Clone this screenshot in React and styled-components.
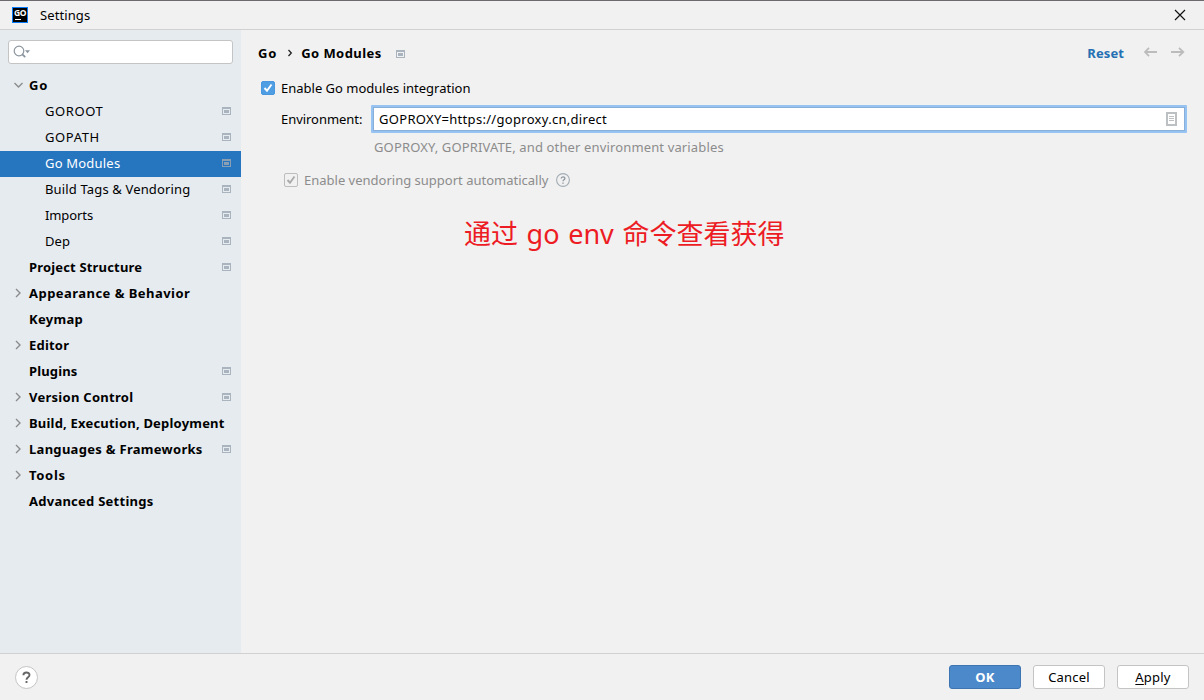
import React from "react";
import styled, { createGlobalStyle } from "styled-components";

const GlobalStyle = createGlobalStyle`
  *, *::before, *::after { box-sizing: border-box; }
  body { margin: 0; background: #f1f1f1; overflow: hidden; }
`;

const Window = styled.div`
  width: 1204px;
  height: 700px;
  display: flex;
  flex-direction: column;
  background: #f1f1f1;
  border-top: 1px solid #6c6a6c;
  font-family: "Noto Sans", "Noto Sans CJK SC", sans-serif;
  font-size: 13px;
  line-height: 18px;
  color: #000;
`;

const Label = styled.span`
  white-space: pre;
  letter-spacing: ${(p) => p.$track || 0}px;
`;

const TitleBar = styled.header`
  display: flex;
  align-items: center;
  height: 29px;
  flex: none;
  padding: 0 18px 0 12px;
  border-bottom: 1px solid #d1d1d1;
`;

const Title = styled(Label)`
  flex: 1;
  margin-left: 12px;
`;

const Body = styled.div`
  display: flex;
  flex: 1;
  min-height: 0;
`;

const Sidebar = styled.nav`
  width: 241px;
  flex: none;
  padding-top: 10px;
  background: #e6ebf0;
`;

const SearchBox = styled.div`
  display: flex;
  align-items: center;
  width: 225px;
  height: 24px;
  margin: 0 0 9px 8px;
  padding-left: 4px;
  background: #fff;
  border: 1px solid #c4c4c4;
  border-radius: 3px;
`;

const Row = styled.div`
  display: flex;
  align-items: center;
  height: 26px;
  padding: 0 10px 2px ${(p) => (p.$child ? 45 : 12)}px;
  font-weight: ${(p) => (p.$child ? 400 : 700)};
  color: ${(p) => (p.$selected ? "#fff" : "#000")};
  background: ${(p) => (p.$selected ? "#2675bf" : "transparent")};
`;

const ArrowSlot = styled.span`
  display: flex;
  width: 17px;
  flex: none;
`;

const RowLabel = styled(Label)`
  flex: 1;
`;

const Content = styled.main`
  flex: 1;
  padding: 13px 17px 0;
`;

const Header = styled.div`
  display: flex;
  align-items: center;
  height: 20px;
  font-weight: 700;
`;

const Crumb = styled.span`
  display: flex;
  margin: 0 8px 0 10px;
`;

const Badge = styled.span`
  display: flex;
  margin: 1px 0 0 14px;
`;

const Actions = styled.div`
  display: flex;
  align-items: center;
  margin-left: auto;
  color: #2470b3;
`;

const History = styled.span`
  display: flex;
  gap: 13px;
  margin: 0 2px 2px 20px;
`;

const CheckRow = styled.label`
  display: flex;
  align-items: center;
  height: 18px;
  margin: ${(p) => (p.$nested ? "15px 0 0 26px" : "16px 0 0 3px")};
  color: ${(p) => (p.$nested ? "#8c8c8c" : "#000")};
`;

const CheckBox = styled.span`
  display: flex;
  width: 14px;
  height: 14px;
  flex: none;
  margin-right: 6px;
  border-radius: 2px;
  border: 1px solid ${(p) => (p.$disabled ? "#bdbdbd" : "#4a97dd")};
  background: ${(p) => (p.$disabled ? "#f1f1f1" : "#4f9ee3")};
  color: ${(p) => (p.$disabled ? "#ababab" : "#fff")};
`;

const HelpSlot = styled.span`
  display: flex;
  margin-left: 8px;
`;

const Field = styled.div`
  display: flex;
  align-items: center;
  margin: 8px 0 0 23px;
  height: 28px;
`;

const Input = styled.div`
  display: flex;
  align-items: center;
  justify-content: space-between;
  width: 816px;
  height: 28px;
  margin-left: auto;
  padding: 0 8px 0 6px;
  background: #fff;
  border: 2px solid #97c3f3;
  box-shadow: inset 0 0 0 1px #87afda;
  border-radius: 1px;
`;

const Hint = styled.div`
  margin: 5px 0 0 116px;
  height: 18px;
  color: #8c8c8c;
`;

const Annotation = styled.div`
  margin: 25px 0 0 206px;
  font-size: 27px;
  line-height: 40px;
  word-spacing: 1.6px;
  color: #ed1c24;
`;

const Footer = styled.footer`
  display: flex;
  align-items: center;
  gap: 12px;
  height: 47px;
  flex: none;
  padding: 0 15px;
  border-top: 1px solid #d1d1d1;
`;

const HelpButton = styled.button`
  display: flex;
  align-items: center;
  justify-content: center;
  width: 23px;
  height: 23px;
  margin: 1px auto 0 0;
  padding: 0;
  border: 1px solid #c4c4c4;
  border-radius: 50%;
  background: #fff;
`;

const Button = styled.button`
  width: 72px;
  height: 24px;
  padding: 0 0 1px;
  border-radius: 3px;
  border: 1px solid ${(p) => (p.$primary ? "#3d75b3" : "#c4c4c4")};
  background: ${(p) => (p.$primary ? "#4c89ca" : "#fff")};
  color: ${(p) => (p.$primary ? "#fff" : "#000")};
  font: inherit;
  font-weight: ${(p) => (p.$primary ? 700 : 400)};
  letter-spacing: 0.2px;
`;

const Mnemonic = styled.span`
  text-decoration: underline;
  text-underline-offset: 2px;
`;

const LogoBox = styled.span`
  display: flex;
  flex-direction: column;
  width: 16px;
  height: 16px;
  padding: 1px 0 0 1px;
  border: 1px solid #087cfa;
  background: #000;
  color: #fff;
  font: 700 8.5px/8px "Noto Sans", sans-serif;
  letter-spacing: -0.3px;
  &::after {
    content: "";
    width: 6px;
    height: 1px;
    margin: 2px 0 0 1px;
    background: #fff;
  }
`;

const ProjectIcon = ({ selected }) => (
  <svg width="9" height="8" shapeRendering="crispEdges" fill={selected ? "#8a9fb3" : "#a9b4be"}>
    <path fillRule="evenodd" d="M0 0h9v8H0zM1 2v5h7V2z" />
    <path d="M2 3h5v3H2z" />
  </svg>
);

const Chevron = ({ open }) => (
  <svg width="12" height="12" fill="none" stroke="#8c8c8c" strokeWidth="1.4">
    <path d={open ? "M2.5 4 6.5 8 10.5 4" : "M4 2 8 6 4 10"} />
  </svg>
);

const SearchIcon = () => (
  <svg width="18" height="14" fill="none" stroke="#8b959e" strokeWidth="1.2">
    <circle cx="6" cy="6" r="4.8" />
    <path d="M9.4 9.4 12.2 12.2" strokeWidth="1.8" />
    <path d="M12 5.3h5L14.5 8.2z" fill="#8b959e" stroke="none" />
  </svg>
);

const CloseIcon = () => (
  <svg width="12" height="12" stroke="#111" strokeWidth="1.15">
    <path d="M1 1 11 11M11 1 1 11" />
  </svg>
);

const ArrowIcon = ({ right }) => (
  <svg width="14" height="12" fill="none" stroke="#bcbcbc" strokeWidth="1.8">
    <path d={right ? "M0 6H12M8 1.8 12.3 6 8 10.2" : "M13 6H1M5 1.8 .9 6 5 10.2"} />
  </svg>
);

const CheckIcon = () => (
  <svg width="12" height="12" fill="none" stroke="currentColor" strokeWidth="1.9">
    <path d="M2.5 6 5 8.7 9.5 2.5" />
  </svg>
);

const PageIcon = () => (
  <svg width="11" height="14" fill="none" stroke="#bcc0c3" shapeRendering="crispEdges">
    <path d="M1 1H10V13H1z" strokeWidth="2" />
    <path d="M3 4.5H8M3 6.5H8M3 8.5H8" />
  </svg>
);

const HelpIcon = () => (
  <svg width="14" height="14" fill="none" stroke="#a3adb5">
    <circle cx="7" cy="7" r="6.4" strokeWidth="1.1" />
    <path d="M5.2 5.6C5.2 3.2 8.9 3.3 8.9 5.4 8.9 6.7 7 6.8 7 8.3" stroke="#8c969e" strokeWidth="1.3" />
    <path d="M7 9.5v1.3" stroke="#8c969e" strokeWidth="1.4" />
  </svg>
);

const QuestionIcon = () => (
  <svg width="11" height="13" fill="none" stroke="#666" strokeWidth="1.9">
    <path d="M2.4 4.2C2.4 .6 8.6 .7 8.5 4 8.4 6.2 5.5 6.2 5.5 8.8" />
    <path d="M5.5 10v2" />
  </svg>
);

const items = [
  { text: "Go", arrow: "open", track: 0.8 },
  { text: "GOROOT", child: true, icon: true, track: 0.6 },
  { text: "GOPATH", child: true, icon: true, track: 0.6 },
  { text: "Go Modules", child: true, icon: true, selected: true, track: 0.2 },
  { text: "Build Tags & Vendoring", child: true, icon: true, track: 0.15 },
  { text: "Imports", child: true, icon: true, track: -0.1 },
  { text: "Dep", child: true, icon: true, track: 0.1 },
  { text: "Project Structure", icon: true, track: 0.17 },
  { text: "Appearance & Behavior", arrow: "closed", track: 0.46 },
  { text: "Keymap", track: 0.3 },
  { text: "Editor", arrow: "closed", track: 0.2 },
  { text: "Plugins", icon: true, track: 0.14 },
  { text: "Version Control", arrow: "closed", icon: true, track: 0.27 },
  { text: "Build, Execution, Deployment", arrow: "closed", track: 0.2 },
  { text: "Languages & Frameworks", arrow: "closed", icon: true, track: 0.29 },
  { text: "Tools", arrow: "closed", track: 0.7 },
  { text: "Advanced Settings", track: 0.25 },
];

export default function App() {
  return (
    <>
      <GlobalStyle />
      <Window>
        <TitleBar>
          <LogoBox>GO</LogoBox>
          <Title $track={0.1}>Settings</Title>
          <CloseIcon />
        </TitleBar>
        <Body>
          <Sidebar>
            <SearchBox>
              <SearchIcon />
            </SearchBox>
            {items.map((item) => (
              <Row key={item.text} $child={item.child} $selected={item.selected}>
                {!item.child && (
                  <ArrowSlot>{item.arrow && <Chevron open={item.arrow === "open"} />}</ArrowSlot>
                )}
                <RowLabel $track={item.track}>{item.text}</RowLabel>
                {item.icon && <ProjectIcon selected={item.selected} />}
              </Row>
            ))}
          </Sidebar>
          <Content>
            <Header>
              <Label $track={0.8}>Go</Label>
              <Crumb>
                <svg width="6" height="8" fill="none" stroke="#222" strokeWidth="1.3">
                  <path d="M1.5 1 4.3 4 1.5 7" />
                </svg>
              </Crumb>
              <Label $track={0.45}>Go Modules</Label>
              <Badge>
                <ProjectIcon />
              </Badge>
              <Actions>
                <Label $track={0.1}>Reset</Label>
                <History>
                  <ArrowIcon />
                  <ArrowIcon right />
                </History>
              </Actions>
            </Header>
            <CheckRow>
              <CheckBox>
                <CheckIcon />
              </CheckBox>
              <Label>Enable Go modules integration</Label>
            </CheckRow>
            <Field>
              <Label $track={-0.05}>Environment:</Label>
              <Input>
                <Label $track={0.3}>GOPROXY=https://goproxy.cn,direct</Label>
                <PageIcon />
              </Input>
            </Field>
            <Hint>
              <Label $track={0.14}>GOPROXY, GOPRIVATE, and other environment variables</Label>
            </Hint>
            <CheckRow $nested>
              <CheckBox $disabled>
                <CheckIcon />
              </CheckBox>
              <Label>Enable vendoring support automatically</Label>
              <HelpSlot>
                <HelpIcon />
              </HelpSlot>
            </CheckRow>
            <Annotation>
              <Label>通过 go env 命令查看获得</Label>
            </Annotation>
          </Content>
        </Body>
        <Footer>
          <HelpButton>
            <QuestionIcon />
          </HelpButton>
          <Button $primary>OK</Button>
          <Button>Cancel</Button>
          <Button>
            <Mnemonic>A</Mnemonic>pply
          </Button>
        </Footer>
      </Window>
    </>
  );
}
